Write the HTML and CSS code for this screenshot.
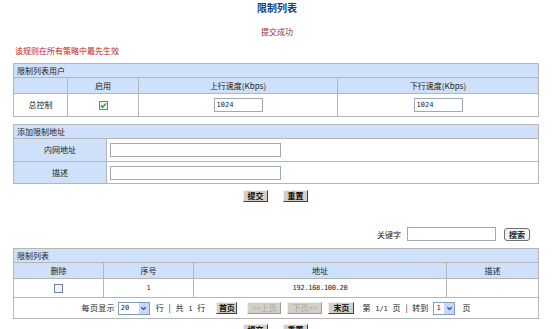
FILE: index.html
```html
<!DOCTYPE html>
<html lang="zh-CN">
<head>
    <meta charset="UTF-8">
    <title>限制列表</title>
    <link rel="stylesheet" href="styles.css">
</head>
<body>
    <div class="page-title">限制列表</div>
    <div class="msg-ok">提交成功</div>
    <div class="rule-note">该规则在所有策略中最先生效</div>

    <!-- 限制列表用户 -->
    <table class="grid grid-user">
        <colgroup><col style="width:54px"><col style="width:71px"><col style="width:199px"><col style="width:201px"></colgroup>
        <tr class="caption-row"><td colspan="4">限制列表用户</td></tr>
        <tr class="head-row">
            <td></td>
            <td>启用</td>
            <td>上行速度(Kbps)</td>
            <td>下行速度(Kbps)</td>
        </tr>
        <tr class="data-row tall">
            <td>总控制</td>
            <td><span class="chk checked"><svg viewBox="0 0 8 8" width="7" height="7"><path d="M1 4 L3 6 L7 1.5" fill="none" stroke="#21a121" stroke-width="1.5"/></svg></span></td>
            <td><span class="txt small">1024</span></td>
            <td><span class="txt small">1024</span></td>
        </tr>
    </table>

    <!-- 添加限制地址 -->
    <table class="grid grid-add">
        <colgroup><col style="width:93px"><col style="width:432px"></colgroup>
        <tr class="caption-row"><td colspan="2">添加限制地址</td></tr>
        <tr class="form-row r1">
            <td class="label">内网地址</td>
            <td class="field"><span class="txt wide"></span></td>
        </tr>
        <tr class="form-row r2">
            <td class="label">描述</td>
            <td class="field"><span class="txt wide"></span></td>
        </tr>
    </table>

    <div class="btn-row">
        <span class="btn">提交</span>
        <span class="btn">重置</span>
    </div>

    <div class="search-row">
        <span class="search-label">关键字</span>
        <span class="txt search"></span>
        <span class="btn-soft">搜索</span>
    </div>

    <!-- 限制列表 -->
    <table class="grid grid-list">
        <colgroup><col style="width:90px"><col style="width:90px"><col style="width:253px"><col style="width:92px"></colgroup>
        <tr class="caption-row"><td colspan="4">限制列表</td></tr>
        <tr class="head-row">
            <td>删除</td>
            <td>序号</td>
            <td>地址</td>
            <td>描述</td>
        </tr>
        <tr class="data-row">
            <td><span class="chk"></span></td>
            <td class="mono">1</td>
            <td class="mono">192.168.100.20</td>
            <td></td>
        </tr>
        <tr class="pager-row">
            <td colspan="4">
                <div class="pager">
                    <span class="p-label">每页显示</span>
                    <span class="sel sel-size">20<i class="arrow"><svg viewBox="0 0 8 8" width="7" height="7"><path d="M1.5 2.5 L4 5 L6.5 2.5" fill="none" stroke="#2b4fa8" stroke-width="1.6"/></svg></i></span>
                    <span class="p-text">行 | 共 <b class="num">1</b> 行</span>
                    <span class="btn pg first">首页</span>
                    <span class="btn pg off prev">&lt;&lt;上页</span>
                    <span class="btn pg off next">下页&gt;&gt;</span>
                    <span class="btn pg last">末页</span>
                    <span class="p-text">第 <b class="num">1/1</b> 页 | 转到</span>
                    <span class="sel sel-page">1<i class="arrow"><svg viewBox="0 0 8 8" width="7" height="7"><path d="M1.5 2.5 L4 5 L6.5 2.5" fill="none" stroke="#2b4fa8" stroke-width="1.6"/></svg></i></span>
                    <span class="p-end">页</span>
                </div>
            </td>
        </tr>
    </table>

    <div class="btn-row bottom">
        <span class="btn">提交</span>
        <span class="btn">重置</span>
    </div>
</body>
</html>
```

FILE: styles.css
```css
body {
    margin: 0;
    padding: 0;
    background: #ffffff;
    font-family: "Noto Sans CJK SC", "DejaVu Sans", sans-serif;
    font-size: 8px;
    color: #222222;
}

.page-title {
    text-align: center;
    font-size: 10px;
    font-weight: bold;
    color: #1d3a7c;
    line-height: 16px;
}

.msg-ok {
    margin-top: 8px;
    text-align: center;
    line-height: 16px;
    color: #9b2b2b;
}

.rule-note {
    margin: 4px 0 0 15px;
    line-height: 14px;
    color: #c21818;
}

/* tables */
.grid {
    width: 525px;
    margin: 5px 0 0 13px;
    border-collapse: collapse;
    table-layout: fixed;
    border: 1px solid #a9a9a9;
}

.grid td {
    border: 1px solid #b5b5b5;
    padding: 0;
    text-align: center;
    line-height: 12px;
}

.caption-row td {
    background: #cfe0fa;
    text-align: left;
    padding-left: 3px;
    height: 13px;
}

.head-row td {
    background: #cfe0fa;
    height: 15px;
}

.data-row td {
    height: 18px;
}

.data-row.tall td {
    height: 22px;
}

.grid-add {
    margin-top: 7px;
}

.form-row td {
    height: 22px;
}

.form-row.r2 td {
    height: 21px;
}

.form-row .label {
    background: #cfe0fa;
}

.form-row .field {
    text-align: left;
    padding-left: 3px;
}

.grid-list {
    margin-top: 7px;
}

.pager-row td {
    height: 20px;
}

.mono {
    font-family: "DejaVu Sans Mono", monospace;
    font-size: 7px;
    letter-spacing: -0.3px;
}

/* inputs */
.txt {
    display: inline-block;
    vertical-align: middle;
    box-sizing: border-box;
    height: 14px;
    border: 1px solid #9fa8b8;
    background: #ffffff;
    text-align: left;
    padding-left: 2px;
    font-family: "DejaVu Sans Mono", monospace;
    font-size: 7px;
    line-height: 12px;
}

.txt.small {
    width: 49px;
}

.txt.wide {
    width: 171px;
}

.txt.search {
    width: 89px;
}

.chk {
    display: inline-flex;
    align-items: center;
    justify-content: center;
    vertical-align: middle;
    box-sizing: border-box;
    width: 9px;
    height: 9px;
    border: 1px solid #6d7f9c;
    background: #f4f4f4;
}

.chk.checked {
    background: #eef4ee;
}

/* buttons */
.btn-row {
    display: flex;
    gap: 15px;
    margin: 6px 0 0 243px;
}

.btn-row.bottom {
    margin-top: 5px;
}

.btn {
    display: inline-block;
    box-sizing: border-box;
    height: 12px;
    line-height: 10px;
    padding: 0 3px;
    background: #d4d0c8;
    border: 1px solid;
    border-color: #eeeeee #404040 #404040 #eeeeee;
    color: #111111;
    font-weight: bold;
    text-align: center;
}

.btn-row .btn {
    min-width: 25px;
}

.search-row {
    display: flex;
    align-items: center;
    justify-content: flex-end;
    margin: 25px 24px 0 0;
    height: 14px;
}

.search-label {
    margin-right: 6px;
}

.btn-soft {
    display: inline-block;
    box-sizing: border-box;
    height: 13px;
    line-height: 11px;
    margin-left: 8px;
    padding: 0 4px;
    border: 1px solid #707070;
    border-radius: 3px;
    background: #f4f4f2;
    font-weight: bold;
}

/* pager */
.pager {
    display: flex;
    align-items: center;
    justify-content: center;
}

.pager .p-label {
    letter-spacing: 0.3px;
}

.pager .p-text {
    word-spacing: 3px;
}

.pager .num {
    font-weight: normal;
    font-family: "DejaVu Sans Mono", monospace;
    font-size: 7px;
}

.sel-size {
    margin-left: 3px;
}

.sel-size + .p-text {
    margin-left: 6px;
}

.btn.pg {
    padding: 0;
}

.btn.pg.first {
    width: 21px;
    margin-left: 11px;
}

.btn.pg.prev {
    width: 34px;
    margin-left: 10px;
}

.btn.pg.next {
    width: 35px;
    margin-left: 6px;
}

.btn.pg.last {
    width: 26px;
    margin-left: 6px;
}

.btn.pg.last + .p-text {
    margin-left: 8px;
}

.sel-page {
    margin-left: 5px;
}

.p-end {
    margin-left: 7px;
}

.btn.pg.off {
    color: #a8a8a8;
    font-weight: normal;
    border-color: #f0f0f0 #9a9a9a #9a9a9a #f0f0f0;
}

.sel {
    display: inline-flex;
    align-items: center;
    justify-content: space-between;
    box-sizing: border-box;
    height: 13px;
    border: 1px solid #7f9db9;
    background: #ffffff;
    padding-left: 2px;
    font-family: "DejaVu Sans Mono", monospace;
    font-size: 7px;
}

.sel-size {
    width: 32px;
}

.sel-page {
    width: 22px;
}

.sel .arrow {
    display: inline-flex;
    align-items: center;
    justify-content: center;
    width: 10px;
    height: 11px;
    background: #c9d8f8;
}
```
